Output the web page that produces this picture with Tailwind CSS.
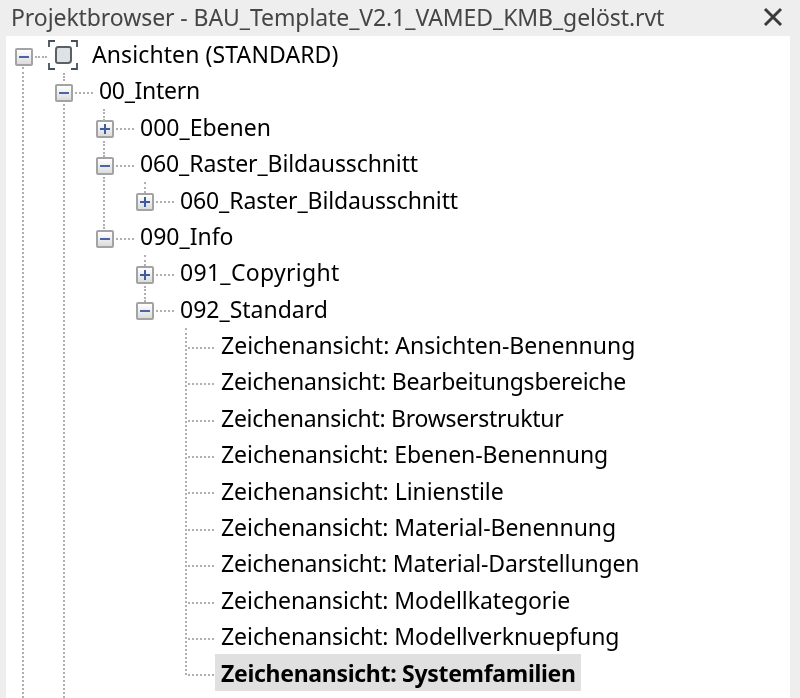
<!DOCTYPE html>
<html lang="de">
<head>
  <meta charset="UTF-8">
  <script src="https://cdn.jsdelivr.net/npm/@tailwindcss/browser@4"></script>
  <title>Projektbrowser</title>
</head>
<body class="bg-[#eeeeee] overflow-hidden">
  <div class="relative w-[800px] h-[698px] flex flex-col font-['Noto_Sans',sans-serif] text-[23px] text-black blur-[0.4px]">
    <!-- Titelleiste -->
    <div class="h-[36px] shrink-0 flex items-center justify-between pl-[11px] pr-[16px] text-[#454545]">
      <span class="tracking-[-0.08px] leading-none -mt-[2px]">Projektbrowser - BAU_Template_V2.1_VAMED_KMB_gelöst.rvt</span>
      <svg class="w-[22px] h-[22px] -mt-[3px]" viewBox="0 0 22 22" fill="none" stroke="#3a3a3a" stroke-width="3"><path d="M3 3 L19 19 M19 3 L3 19"/></svg>
    </div>

    <!-- Baum -->
    <div class="flex-1 ml-[6px] mr-[10px] bg-white flex flex-col">
      <div class="h-[36.4px] flex items-center pl-[9px]">
        <span class="mt-[5px] w-[18px] h-[18px] flex items-center justify-center border-2 border-[#a3a3a3] rounded-[2px] bg-linear-to-b from-white to-[#dcdcdc]"><span class="w-[10px] h-[2px] bg-[#4a64a8]"></span></span>
        <span class="mt-[5px] ml-[2px] w-[12px] border-t-2 border-dotted border-[#b0b0b0]"></span>
        <svg class="ml-[1px] w-[30px] h-[30px] mt-[2px]" viewBox="0 0 30 30" fill="none">
          <path d="M1 7V1H7 M23 1H29V7 M29 23V29H23 M7 29H1V23" stroke="#44505c" stroke-width="1.8"/>
          <path d="M10 7H21Q23 7 23 9V20Q23 23 20 23H10Q8 23 8 21V10Q8 7 10 7Z" fill="#dfe2e5" stroke="#5a6068" stroke-width="2"/>
        </svg>
        <span class="ml-[14px] tracking-[0.1px]">Ansichten (STANDARD)</span>
      </div>
      <div class="h-[36.4px] flex items-center pl-[49px]">
        <span class="mt-[5px] w-[18px] h-[18px] flex items-center justify-center border-2 border-[#a3a3a3] rounded-[2px] bg-linear-to-b from-white to-[#dcdcdc]"><span class="w-[10px] h-[2px] bg-[#4a64a8]"></span></span>
        <span class="mt-[5px] ml-[2px] w-[18px] border-t-2 border-dotted border-[#b0b0b0]"></span>
        <span class="ml-[6px] tracking-[-0.3px]">00_Intern</span>
      </div>
      <div class="h-[36.4px] flex items-center pl-[90px]">
        <span class="mt-[5px] w-[18px] h-[18px] flex items-center justify-center border-2 border-[#a3a3a3] rounded-[2px] bg-linear-to-b from-white to-[#dcdcdc] text-[#3f5aa0]"><svg class="w-[12px] h-[12px]" viewBox="0 0 12 12" fill="currentColor"><path d="M5 1h2v4h4v2H7v4H5V7H1V5h4z"/></svg></span>
        <span class="mt-[5px] ml-[2px] w-[18px] border-t-2 border-dotted border-[#b0b0b0]"></span>
        <span class="ml-[6px]">000_Ebenen</span>
      </div>
      <div class="h-[36.4px] flex items-center pl-[90px]">
        <span class="mt-[5px] w-[18px] h-[18px] flex items-center justify-center border-2 border-[#a3a3a3] rounded-[2px] bg-linear-to-b from-white to-[#dcdcdc]"><span class="w-[10px] h-[2px] bg-[#4a64a8]"></span></span>
        <span class="mt-[5px] ml-[2px] w-[18px] border-t-2 border-dotted border-[#b0b0b0]"></span>
        <span class="ml-[6px] tracking-[-0.12px]">060_Raster_Bildausschnitt</span>
      </div>
      <div class="h-[36.4px] flex items-center pl-[130px]">
        <span class="mt-[5px] w-[18px] h-[18px] flex items-center justify-center border-2 border-[#a3a3a3] rounded-[2px] bg-linear-to-b from-white to-[#dcdcdc] text-[#3f5aa0]"><svg class="w-[12px] h-[12px]" viewBox="0 0 12 12" fill="currentColor"><path d="M5 1h2v4h4v2H7v4H5V7H1V5h4z"/></svg></span>
        <span class="mt-[5px] ml-[2px] w-[18px] border-t-2 border-dotted border-[#b0b0b0]"></span>
        <span class="ml-[6px] tracking-[-0.12px]">060_Raster_Bildausschnitt</span>
      </div>
      <div class="h-[36.4px] flex items-center pl-[90px]">
        <span class="mt-[5px] w-[18px] h-[18px] flex items-center justify-center border-2 border-[#a3a3a3] rounded-[2px] bg-linear-to-b from-white to-[#dcdcdc]"><span class="w-[10px] h-[2px] bg-[#4a64a8]"></span></span>
        <span class="mt-[5px] ml-[2px] w-[18px] border-t-2 border-dotted border-[#b0b0b0]"></span>
        <span class="ml-[6px]">090_Info</span>
      </div>
      <div class="h-[36.4px] flex items-center pl-[130px]">
        <span class="mt-[5px] w-[18px] h-[18px] flex items-center justify-center border-2 border-[#a3a3a3] rounded-[2px] bg-linear-to-b from-white to-[#dcdcdc] text-[#3f5aa0]"><svg class="w-[12px] h-[12px]" viewBox="0 0 12 12" fill="currentColor"><path d="M5 1h2v4h4v2H7v4H5V7H1V5h4z"/></svg></span>
        <span class="mt-[5px] ml-[2px] w-[18px] border-t-2 border-dotted border-[#b0b0b0]"></span>
        <span class="ml-[6px] tracking-[0.3px]">091_Copyright</span>
      </div>
      <div class="h-[36.4px] flex items-center pl-[130px]">
        <span class="mt-[5px] w-[18px] h-[18px] flex items-center justify-center border-2 border-[#a3a3a3] rounded-[2px] bg-linear-to-b from-white to-[#dcdcdc]"><span class="w-[10px] h-[2px] bg-[#4a64a8]"></span></span>
        <span class="mt-[5px] ml-[2px] w-[18px] border-t-2 border-dotted border-[#b0b0b0]"></span>
        <span class="ml-[6px]">092_Standard</span>
      </div>
      <div class="h-[36.4px] flex items-center pl-[182px]"><span class="mt-[5px] w-[26px] border-t-2 border-dotted border-[#b0b0b0]"></span><span class="ml-[7px]">Zeichenansicht: Ansichten-Benennung</span></div>
      <div class="h-[36.4px] flex items-center pl-[182px]"><span class="mt-[5px] w-[26px] border-t-2 border-dotted border-[#b0b0b0]"></span><span class="ml-[7px] tracking-[-0.22px]">Zeichenansicht: Bearbeitungsbereiche</span></div>
      <div class="h-[36.4px] flex items-center pl-[182px]"><span class="mt-[5px] w-[26px] border-t-2 border-dotted border-[#b0b0b0]"></span><span class="ml-[7px] tracking-[-0.26px]">Zeichenansicht: Browserstruktur</span></div>
      <div class="h-[36.4px] flex items-center pl-[182px]"><span class="mt-[5px] w-[26px] border-t-2 border-dotted border-[#b0b0b0]"></span><span class="ml-[7px] tracking-[-0.06px]">Zeichenansicht: Ebenen-Benennung</span></div>
      <div class="h-[36.4px] flex items-center pl-[182px]"><span class="mt-[5px] w-[26px] border-t-2 border-dotted border-[#b0b0b0]"></span><span class="ml-[7px] tracking-[-0.04px]">Zeichenansicht: Linienstile</span></div>
      <div class="h-[36.4px] flex items-center pl-[182px]"><span class="mt-[5px] w-[26px] border-t-2 border-dotted border-[#b0b0b0]"></span><span class="ml-[7px] tracking-[-0.06px]">Zeichenansicht: Material-Benennung</span></div>
      <div class="h-[36.4px] flex items-center pl-[182px]"><span class="mt-[5px] w-[26px] border-t-2 border-dotted border-[#b0b0b0]"></span><span class="ml-[7px] tracking-[-0.15px]">Zeichenansicht: Material-Darstellungen</span></div>
      <div class="h-[36.4px] flex items-center pl-[182px]"><span class="mt-[5px] w-[26px] border-t-2 border-dotted border-[#b0b0b0]"></span><span class="ml-[7px] tracking-[-0.06px]">Zeichenansicht: Modellkategorie</span></div>
      <div class="h-[36.4px] flex items-center pl-[182px]"><span class="mt-[5px] w-[26px] border-t-2 border-dotted border-[#b0b0b0]"></span><span class="ml-[7px] tracking-[-0.06px]">Zeichenansicht: Modellverknuepfung</span></div>
      <div class="h-[36.4px] flex items-center pl-[182px]"><span class="mt-[5px] w-[26px] border-t-2 border-dotted border-[#b0b0b0]"></span><span class="ml-[1px] w-[366px] h-[37px] flex items-center pl-[6px] bg-[#e0e0e0] font-bold tracking-[-0.3px]">Zeichenansicht: Systemfamilien</span></div>
    </div>

    <!-- senkrechte Hilfslinien -->
    <span class="absolute left-[22px] top-[67px] h-[631px] border-l-2 border-dotted border-[#b0b0b0]"></span>
    <span class="absolute left-[63px] top-[73px] h-[8px] border-l-2 border-dotted border-[#b0b0b0]"></span>
    <span class="absolute left-[63px] top-[104px] h-[594px] border-l-2 border-dotted border-[#b0b0b0]"></span>
    <span class="absolute left-[103px] top-[109px] h-[12px] border-l-2 border-dotted border-[#b0b0b0]"></span>
    <span class="absolute left-[103px] top-[141px] h-[16px] border-l-2 border-dotted border-[#b0b0b0]"></span>
    <span class="absolute left-[103px] top-[177px] h-[52px] border-l-2 border-dotted border-[#b0b0b0]"></span>
    <span class="absolute left-[144px] top-[182px] h-[11px] border-l-2 border-dotted border-[#b0b0b0]"></span>
    <span class="absolute left-[144px] top-[255px] h-[11px] border-l-2 border-dotted border-[#b0b0b0]"></span>
    <span class="absolute left-[144px] top-[286px] h-[16px] border-l-2 border-dotted border-[#b0b0b0]"></span>
    <span class="absolute left-[185px] top-[328px] h-[347px] border-l-2 border-dotted border-[#b0b0b0]"></span>
  </div>
</body>
</html>
